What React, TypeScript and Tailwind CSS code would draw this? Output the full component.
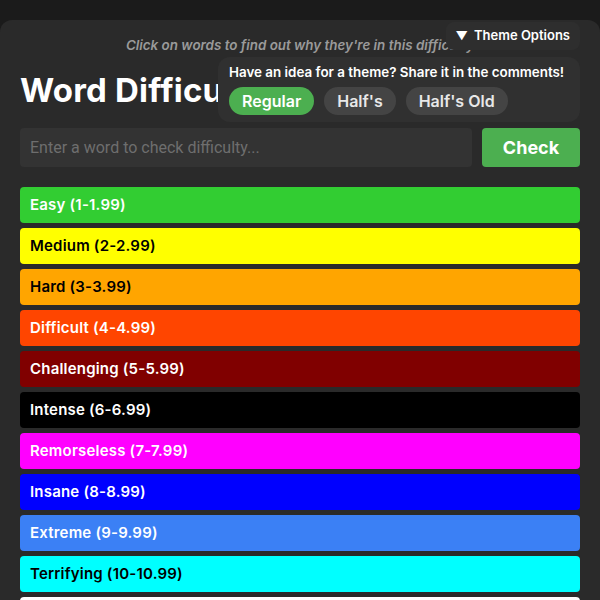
import { useState } from 'react';

const levels = [
    { name: 'Easy (1-1.99)', bg: 'bg-[#32cd32]', fg: 'text-white' },
    { name: 'Medium (2-2.99)', bg: 'bg-[#ffff00]', fg: 'text-black' },
    { name: 'Hard (3-3.99)', bg: 'bg-[#ffa500]', fg: 'text-black' },
    { name: 'Difficult (4-4.99)', bg: 'bg-[#ff4500]', fg: 'text-white' },
    { name: 'Challenging (5-5.99)', bg: 'bg-[#800000]', fg: 'text-white' },
    { name: 'Intense (6-6.99)', bg: 'bg-[#000000]', fg: 'text-white' },
    { name: 'Remorseless (7-7.99)', bg: 'bg-[#ff00ff]', fg: 'text-white' },
    { name: 'Insane (8-8.99)', bg: 'bg-[#0000ff]', fg: 'text-white' },
    { name: 'Extreme (9-9.99)', bg: 'bg-[#3b80f5]', fg: 'text-white' },
    { name: 'Terrifying (10-10.99)', bg: 'bg-[#00ffff]', fg: 'text-black' },
    { name: 'Catastrophic (11-11.99)', bg: 'bg-[#ffffff]', fg: 'text-black' },
    { name: 'Horrific (12-12.99)', bg: 'bg-[#9400d3]', fg: 'text-white' },
];

const themes = ["Regular", "Half's", "Half's Old"];

export default function App() {
    const [theme, setTheme] = useState('Regular');
    const [word, setWord] = useState('');

    return (
        <div className="h-screen bg-[#1b1b1b] pt-5 font-['Inter',sans-serif] overflow-hidden">
            <div className="relative rounded-t-[12px] bg-[#2a2a2a] px-5 pt-[17px] pb-6">
                {/* Subtitle */}
                <p className="text-center text-[13.4px] italic font-semibold text-[#9a9a9a] leading-4">
                    Click on words to find out why they're in this difficulty
                </p>

                <h1 className="mt-[17px] text-[33px] font-bold text-white leading-10 tracking-[0.2px]">
                    Word Difficulty Chart
                </h1>

                {/* Search row */}
                <div className="mt-[18px] flex gap-[10px]">
                    <input
                        value={word}
                        onChange={(e) => setWord(e.target.value)}
                        placeholder="Enter a word to check difficulty..."
                        className="h-[39px] flex-1 rounded-[4px] bg-[#333333] px-[10px] font-['Roboto',sans-serif] text-[16px] text-white placeholder:text-[#6e6e6e] outline-none"
                    />
                    <button className="h-[39px] w-[98px] rounded-[4px] bg-[#4caf50] text-[18px] font-bold text-white">
                        Check
                    </button>
                </div>

                {/* Difficulty rows */}
                <div className="mt-5 flex flex-col gap-[5px]">
                    {levels.map((l) => (
                        <div
                            key={l.name}
                            className={`flex h-9 items-center rounded-[4px] px-[10px] text-[15px] font-semibold tracking-[0.2px] ${l.bg} ${l.fg}`}
                        >
                            {l.name}
                        </div>
                    ))}
                </div>

                {/* Theme options overlay */}
                <div className="absolute right-5 top-[2px] flex h-7 items-center gap-1.5 rounded-[8px] bg-[#2e2e2e] px-2.5 text-[13px] font-semibold text-white">
                    <span className="text-[12px]">▼</span>
                    Theme Options
                </div>
                <div className="absolute right-5 top-[37px] w-[362px] rounded-[12px] bg-[#303030] px-[11px] pt-[7px] pb-[7px]">
                    <p className="text-[13.4px] font-semibold text-white leading-4 whitespace-nowrap">
                        Have an idea for a theme? Share it in the comments!
                    </p>
                    <div className="mt-[7px] flex gap-[10px]">
                        {themes.map((t) => (
                            <button
                                key={t}
                                onClick={() => setTheme(t)}
                                className={`h-7 rounded-full px-[13px] text-[16px] font-semibold ${theme === t ? 'bg-[#4caf50] text-white' : 'bg-[#444444] text-[#e8e8e8]'
                                    }`}
                            >
                                {t}
                            </button>
                        ))}
                    </div>
                </div>
            </div>
        </div>
    );
}
